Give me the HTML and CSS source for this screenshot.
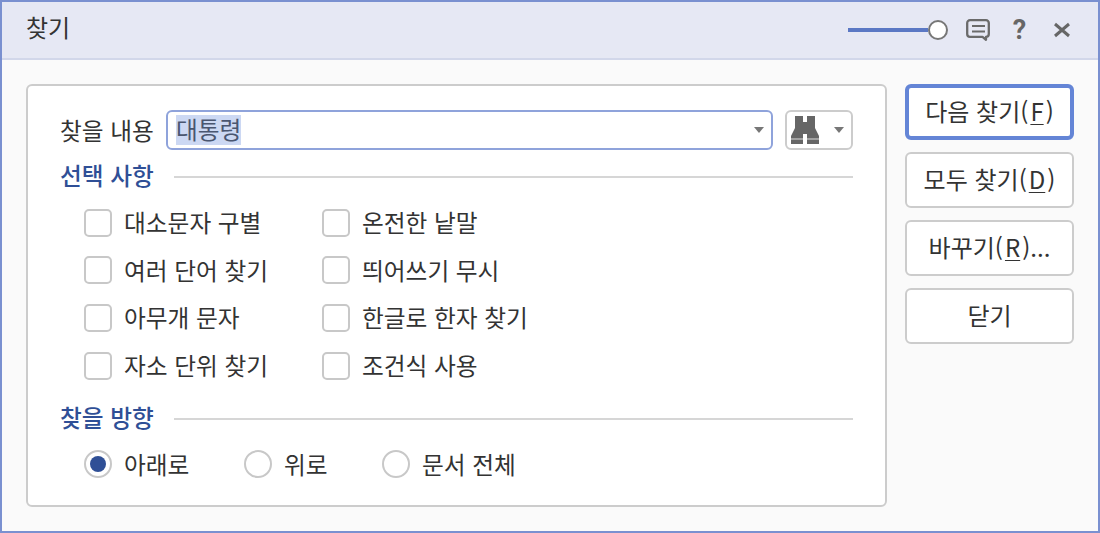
FILE: index.html
```html
<!DOCTYPE html>
<html lang="ko">
<head>
    <meta charset="UTF-8">
    <meta name="viewport" content="width=device-width, initial-scale=1.0">
    <title>찾기</title>
    <link rel="stylesheet" href="styles.css">
</head>
<body>
    <div class="dialog">
        <div class="titlebar">
            <span class="title">찾기</span>
            <div class="title-tools">
                <div class="slider"><span class="slider-line"></span><span class="slider-knob"></span></div>
                <svg class="tool-icon" width="26" height="26" viewBox="0 0 26 26">
                    <path d="M5 3.200H21A2.800 2.800 0 0 1 23.800 6V17A2.800 2.800 0 0 1 21 19.800V22.800L17.500 19.800H5A2.800 2.800 0 0 1 2.200 17V6A2.800 2.800 0 0 1 5 3.200Z" fill="none" stroke="#6a6a6a" stroke-width="2.300" stroke-linejoin="round"/>
                    <path d="M7 9H20M7 14.500H20" stroke="#6a6a6a" stroke-width="2.200"/>
                </svg>
                <span class="help">?</span>
                <svg class="tool-icon" width="20" height="20" viewBox="0 0 20 20">
                    <path d="M3 4L17 16M17 4L3 16" stroke="#666" stroke-width="3"/>
                </svg>
            </div>
        </div>
        <div class="content">
            <div class="panel">
                <div class="search-row">
                    <span class="search-label">찾을 내용</span>
                    <div class="search-input">
                        <span class="selected">대통령</span>
                        <span class="arrow"></span>
                    </div>
                    <div class="icon-button">
                        <svg width="30" height="28" viewBox="0 0 30 28">
                            <path d="M5 0H13V6H17V0H25V12L29 20V28H17V18H13V28H1V20L5 12Z" fill="#666"/>
                            <path d="M1 23H13M17 23H29" stroke="#ddd" stroke-width="1.200"/>
                        </svg>
                        <span class="arrow"></span>
                    </div>
                </div>

                <div class="section-head">
                    <span class="section-title">선택 사항</span>
                    <span class="section-line"></span>
                </div>
                <div class="options">
                    <label class="option"><span class="checkbox"></span>대소문자 구별</label>
                    <label class="option"><span class="checkbox"></span>온전한 낱말</label>
                    <label class="option"><span class="checkbox"></span>여러 단어 찾기</label>
                    <label class="option"><span class="checkbox"></span>띄어쓰기 무시</label>
                    <label class="option"><span class="checkbox"></span>아무개 문자</label>
                    <label class="option"><span class="checkbox"></span>한글로 한자 찾기</label>
                    <label class="option"><span class="checkbox"></span>자소 단위 찾기</label>
                    <label class="option"><span class="checkbox"></span>조건식 사용</label>
                </div>

                <div class="section-head direction-head">
                    <span class="section-title">찾을 방향</span>
                    <span class="section-line"></span>
                </div>
                <div class="directions">
                    <label class="option dir-down"><span class="radio checked"></span>아래로</label>
                    <label class="option dir-up"><span class="radio"></span>위로</label>
                    <label class="option"><span class="radio"></span>문서 전체</label>
                </div>
            </div>
            <div class="actions">
                <button class="button primary">다음 찾기(<u>F</u>)</button>
                <button class="button">모두 찾기(<u>D</u>)</button>
                <button class="button">바꾸기(<u>R</u>)...</button>
                <button class="button">닫기</button>
            </div>
        </div>
    </div>
</body>
</html>
```

FILE: styles.css
```css
* {
    box-sizing: border-box;
}
body {
    margin: 0;
    width: 1100px;
    height: 533px;
    overflow: hidden;
    font-family: "Noto Sans CJK KR", "Noto Sans", sans-serif;
    font-size: 23.700px;
    color: #333;
}
.dialog {
    width: 1100px;
    height: 533px;
    border: 2px solid #7a90d0;
    background-color: #fafafa;
}
.titlebar {
    display: flex;
    justify-content: space-between;
    align-items: center;
    height: 58px;
    padding: 0 26px 0 24px;
    background-color: #e6e8f4;
    border-bottom: 2px solid #d2d7ea;
}
.title {
    font-size: 24px;
    line-height: 1;
    margin-bottom: 7px;
}
.title-tools {
    display: flex;
    align-items: center;
}
.slider {
    display: flex;
    align-items: center;
    margin-right: 17px;
}
.slider-line {
    width: 80px;
    height: 4px;
    background-color: #5b78c4;
}
.slider-knob {
    width: 20px;
    height: 20px;
    border: 2px solid #777;
    border-radius: 50%;
    background-color: #fff;
}
.help {
    width: 22px;
    margin: 0 21.500px 0 17.500px;
    font-family: Roboto, sans-serif;
    font-size: 27px;
    font-weight: bold;
    line-height: 1;
    text-align: center;
    color: #666;
}
.content {
    display: flex;
    align-items: flex-start;
    padding: 24px 24px 0;
}
.panel {
    width: 861px;
    height: 423px;
    padding: 24px 32px 0;
    background-color: #fff;
    border: 2px solid #ccc;
    border-radius: 6px;
}
.search-row {
    display: flex;
    align-items: center;
    height: 40px;
}
.search-label {
    width: 106px;
    line-height: 40px;
}
.search-input {
    display: flex;
    justify-content: space-between;
    align-items: center;
    width: 607px;
    height: 40px;
    padding: 0 7px 0 8px;
    border: 2px solid #8fa3db;
    border-radius: 6px;
    background-color: #fff;
}
.selected {
    height: 30px;
    line-height: 29px;
    background-color: #ccd8f3;
    color: #4a5670;
}
.arrow {
    width: 0;
    height: 0;
    border-left: 5.500px solid transparent;
    border-right: 5.500px solid transparent;
    border-top: 6px solid #777;
}
.icon-button {
    display: flex;
    justify-content: space-between;
    align-items: center;
    width: 68px;
    height: 40px;
    margin-left: 12px;
    padding: 0 7.500px 0 3px;
    border: 2px solid #ccc;
    border-radius: 6px;
}
.section-head {
    display: flex;
    align-items: center;
    height: 40px;
    margin-top: 7px;
}
.section-title {
    font-weight: 500;
    color: #2f4f96;
    line-height: 1;
    margin-bottom: 3px;
}
.section-line {
    flex: 1;
    height: 2px;
    margin-left: 20px;
    background-color: #d6d6d6;
}
.options {
    display: grid;
    grid-template-columns: 238px 1fr;
    grid-auto-rows: 47.600px;
    margin: 2px 0 0 24px;
}
.option {
    display: flex;
    align-items: center;
    line-height: 1;
}
.checkbox {
    width: 28px;
    height: 28px;
    margin-right: 12px;
    border: 2px solid #c8c8c8;
    border-radius: 5px;
    background-color: #fff;
}
.direction-head {
    margin-top: 10px;
}
.directions {
    display: flex;
    height: 46px;
    margin: 2px 0 0 24px;
}
.dir-down {
    width: 160px;
}
.dir-up {
    width: 138px;
}
.radio {
    width: 28px;
    height: 28px;
    margin-right: 12px;
    border: 2px solid #c8c8c8;
    border-radius: 50%;
    background-color: #fff;
}
.radio.checked {
    display: flex;
    justify-content: center;
    align-items: center;
}
.radio.checked::after {
    content: "";
    width: 16px;
    height: 16px;
    border-radius: 50%;
    background-color: #2f4f96;
}
.actions {
    display: flex;
    flex-direction: column;
    gap: 12px;
    margin-left: 18px;
}
.button {
    width: 169px;
    height: 56px;
    padding: 0 0 4px;
    font-family: inherit;
    font-size: 24px;
    color: #333;
    background-color: #fff;
    border: 2px solid #ccc;
    border-radius: 6px;
}
.button.primary {
    border: 4px solid #6485d6;
}
.button u {
    margin: 0 2px;
    text-underline-offset: 3px;
    text-decoration-thickness: 1px;
}
```
